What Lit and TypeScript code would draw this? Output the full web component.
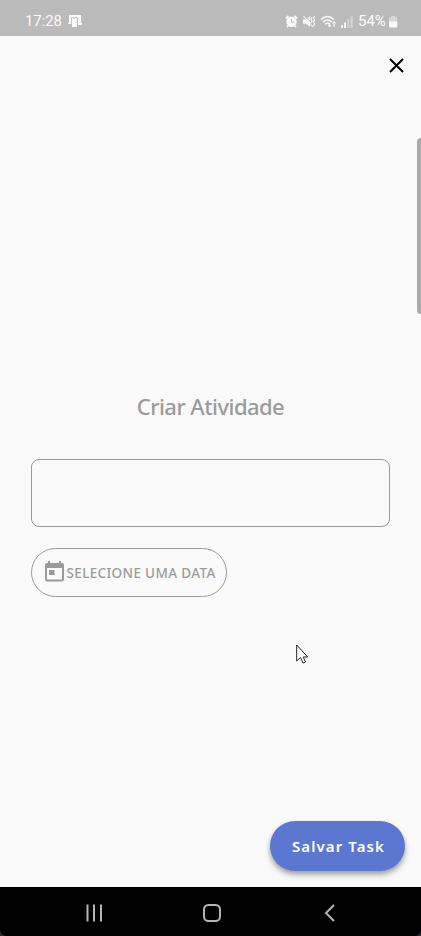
import { LitElement, html, css } from "lit";
import { customElement } from "lit/decorators.js";

@customElement("status-bar")
class StatusBar extends LitElement {
  static styles = css`
    :host { display: flex; height: 36px; box-sizing: border-box; padding: 6px 23px 0 25px; background: #bababa; color: #fafafa; align-items: center; font: 15px/20px Roboto, sans-serif; }
    .time { width: 42px; letter-spacing: -0.1px; white-space: nowrap; }
    .spacer { flex: 1; }
    .icons { display: flex; align-items: center; gap: 4px; }
    .percent { width: 30px; margin-left: 5px; letter-spacing: 0; white-space: nowrap; }
    svg { display: block; flex: none; }
  `;
  render() {
    return html`
      <span class="time">17:28</span>
      <svg width="15" height="14" viewBox="0 0 15 14">
        <path d="M2 1h12v8h1v2h-4V4H5v6H1V9h1z" fill="#fafafa"/>
        <path d="M5 4h5v9H5z" fill="#fafafa"/><path d="M4.500 11V3.500h1.800v.8h2v-.8h2V11" fill="none" stroke="#bababa" stroke-width=".8"/>
      </svg>
      <span class="spacer"></span>
      <div class="icons">
        <svg width="13" height="13" viewBox="0 0 13 13">
          <circle cx="6.500" cy="6.700" r="5.200" fill="#fafafa"/>
          <path d="M1 3.500 3.500 1M12 3.500 9.500 1M3 11l-1 1M10 11l1 1" stroke="#fafafa" stroke-width="1.800"/>
          <path d="M6.500 3.800v3.400h2.800" fill="none" stroke="#bababa" stroke-width="1"/>
        </svg>
        <svg width="14" height="13" viewBox="0 0 14 13">
          <path d="M1 4.500h3L8 1v11L4 8.800H1z" fill="#fafafa"/>
          <path d="M2.500 0l10 11" stroke="#bababa" stroke-width="1"/>
          <path d="M1.500 1l9.500 11M10 2l-1 2 1 2-1 2M12.500 1l-1 2 1 2-1 2 1 2-1 2" fill="none" stroke="#fafafa" stroke-width="1.100"/>
        </svg>
        <svg width="17" height="13" viewBox="0 0 17 13">
          <path d="M1 4.500Q7.500-1.500 14 4.500M3 7Q7.500 2.800 12 7M5 9.300q2.500-2.200 5 0" fill="none" stroke="#fafafa" stroke-width="1.400"/>
          <path d="M7.500 10h4l-2 2.500zM12 8.500h4L14 6zM13.400 8h1.200v4h-1.200zM8.900 8h1.200v3H8.900z" fill="#fafafa"/>
        </svg>
        <svg width="12" height="13" viewBox="0 0 12 13">
          <path d="M0 10h2v3H0zM3 7.500h2V13H3z" fill="#fafafa"/><path d="M6.300 4h2v9h-2zM9.700 1h2v12h-2z" fill="#d4d4d4"/>
        </svg>
      </div>
      <span class="percent">54%</span>
      <svg width="10" height="13" viewBox="0 0 10 13">
        <path d="M3 1h4v1h1q1 0 1 1v4H1V3q0-1 1-1h1z" fill="#d6d6d6"/>
        <path d="M1 6.500h8.300V11q0 1.500-1.300 1.500H2.300Q1 12.500 1 11z" fill="#fafafa"/>
      </svg>
    `;
  }
}

@customElement("task-form")
class TaskForm extends LitElement {
  static styles = css`
    :host { display: flex; flex-direction: column; flex: 1; padding: 0 31px; font-family: "Noto Sans", sans-serif; color: #9a9a9a; }
    .title { margin: 304px 0 0; text-align: center; font-size: 22px; line-height: 32px; font-weight: 500; letter-spacing: -0.55px; white-space: nowrap; }
    .field { margin-top: 37px; height: 68px; box-sizing: border-box; border: 1px solid #9b9b9b; border-radius: 8px; background: transparent; outline: none; width: 359px; padding: 0 12px; }
    .date { margin-top: 21px; width: 196px; height: 49px; box-sizing: border-box; border: 1px solid #9b9b9b; border-radius: 25px; display: flex; align-items: center; padding: 0 0 0 13px; background: none; color: inherit; font: 500 13.500px/20px "Noto Sans", sans-serif; letter-spacing: .35px; white-space: nowrap; gap: 2.500px; }
    .date svg { flex: none; margin-top: -2px; }
    .save { margin: auto -15px 16px auto; width: 135px; height: 50px; border: 0; border-radius: 25px; padding: 0 0 0 2px; background: #5c77d0; color: #fff; font: 600 15px/20px "Noto Sans", sans-serif; letter-spacing: 1.100px; white-space: nowrap; box-shadow: 0 3px 5px rgba(0,0,0,.3), 0 5px 9px rgba(0,0,0,.1); }
  `;
  render() {
    return html`
      <h1 class="title">Criar Atividade</h1>
      <input class="field" aria-label="Atividade">
      <button class="date">
        <svg width="19" height="21" viewBox="0 0 19 21">
          <path fill="#9a9a9a" fill-rule="evenodd" d="M3 0h2v2h9V0h2v2h1q2 0 2 2v14.500q0 2-2 2H2q-2 0-2-2V4q0-2 2-2h1zM2 7v11.500h15V7zM4 9h5.500v5H4z"/>
        </svg>
        <span>SELECIONE UMA DATA</span>
      </button>
      <button class="save">Salvar Task</button>
    `;
  }
}

@customElement("nav-bar")
class NavBar extends LitElement {
  static styles = css`
    :host { display: flex; height: 49px; background: #000; justify-content: space-between; align-items: center; padding: 0 81px; box-sizing: border-box; position: relative; }
    svg { display: block; margin-top: 2px; }
    .home { margin-right: 4px; }
    .corner { position: absolute; bottom: 0; margin: 0; }
    .left { left: 0; }
    .right { right: 0; }
  `;
  render() {
    return html`
      <svg width="26" height="20" viewBox="0 0 26 20"><path d="M6.500 1.500v17M13 1.500v17M20 1.500v17" stroke="#b5b5b5" stroke-width="2"/></svg>
      <svg class="home" width="20" height="20" viewBox="0 0 20 20"><rect x="2" y="2" width="16" height="16" rx="4.500" fill="none" stroke="#b5b5b5" stroke-width="2"/></svg>
      <svg width="20" height="20" viewBox="0 0 20 20"><path d="M14 2 6 10l8 8" fill="none" stroke="#b5b5b5" stroke-width="2"/></svg>
      <svg class="corner left" width="6" height="6"><path d="M0 0q1 5 6 6H0z" fill="#29292b"/></svg>
      <svg class="corner right" width="6" height="6"><path d="M6 0Q5 5 0 6h6z" fill="#29292b"/></svg>
    `;
  }
}

@customElement("app-root")
class AppRoot extends LitElement {
  static styles = css`
    :host { display: flex; flex-direction: column; width: 421px; height: 936px; background: #fafafa; position: relative; overflow: hidden; }
    .header { display: flex; justify-content: flex-end; height: 50px; padding: 0 17px; align-items: center; box-sizing: border-box; }
    .header svg { margin-top: 8px; }
    .scroll { position: absolute; right: 0; top: 138px; width: 4px; height: 176px; border-radius: 4px 0 0 4px; background: #aaa; }
    .cursor { position: absolute; left: 296px; top: 644px; }
  `;
  render() {
    return html`
      <status-bar></status-bar>
      <div class="header">
        <svg width="15" height="15" viewBox="0 0 15 15"><path d="M1 1l13 13M14 1 1 14" stroke="#000" stroke-width="2"/></svg>
      </div>
      <task-form></task-form>
      <nav-bar></nav-bar>
      <div class="scroll"></div>
      <svg class="cursor" width="13" height="20" viewBox="0 0 13 20">
        <path d="M.7 1v16L4.500 13.500 7 19l2.500-1-2.300-5h4.500z" fill="#fff" stroke="#20202a" stroke-width="1"/>
      </svg>
    `;
  }
}
